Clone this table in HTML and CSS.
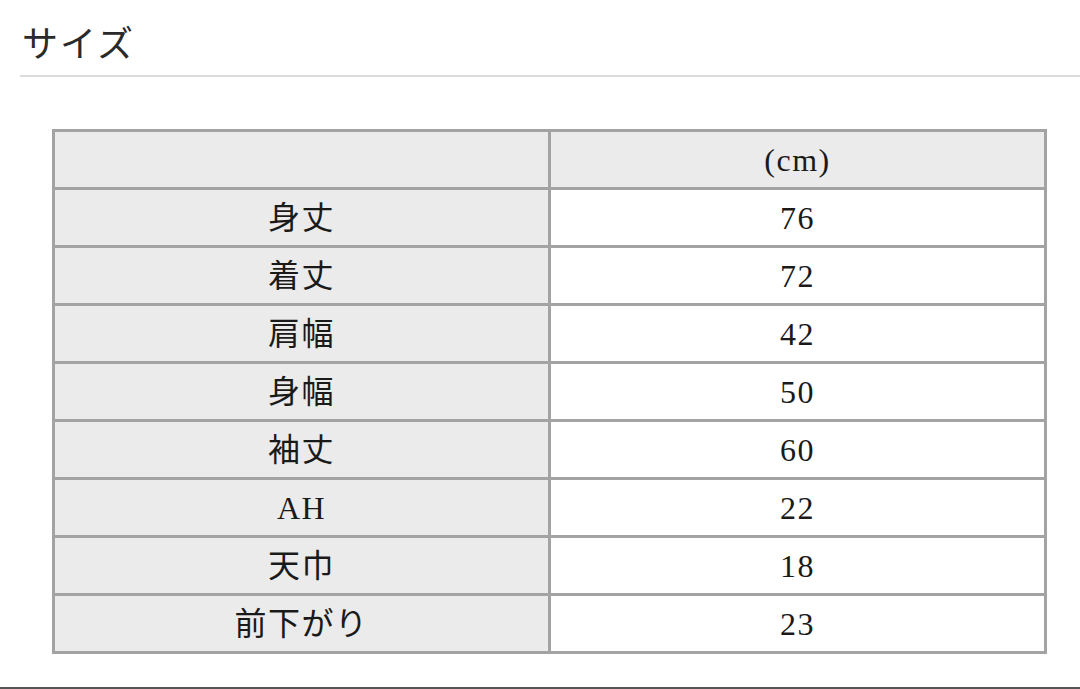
FILE: index.html
```html
<!DOCTYPE html>
<html lang="ja">
<head>
<meta charset="utf-8">
<link rel="stylesheet" href="styles.css">
</head>
<body>
<div class="page">
  <h2 class="title">サイズ</h2>
  <div class="rule"></div>
  <table class="size-table">
    <tr class="head"><th class="label"></th><th class="value">(cm)</th></tr>
    <tr><td class="label">身丈</td><td class="value">76</td></tr>
    <tr><td class="label">着丈</td><td class="value">72</td></tr>
    <tr><td class="label">肩幅</td><td class="value">42</td></tr>
    <tr><td class="label">身幅</td><td class="value">50</td></tr>
    <tr><td class="label">袖丈</td><td class="value">60</td></tr>
    <tr><td class="label">AH</td><td class="value">22</td></tr>
    <tr><td class="label">天巾</td><td class="value">18</td></tr>
    <tr><td class="label">前下がり</td><td class="value">23</td></tr>
  </table>
  <div class="bottom-line"></div>
</div>
</body>
</html>
```
FILE: styles.css
```css
html, body {
  margin: 0;
  padding: 0;
  background: #fff;
}
.page {
  width: 1080px;
  height: 689px;
  overflow: hidden;
  position: relative;
  font-family: "Liberation Serif", "Noto Sans CJK JP", serif;
  color: #1a1a1a;
}
.title {
  margin: 0;
  padding: 23px 0 0 22px;
  height: 52px;
  font-weight: normal;
  font-size: 36px;
  line-height: 44px;
  letter-spacing: 2px;
  color: #2a2a2a;
}
.rule {
  margin-left: 20px;
  border-top: 2px solid #dcdcdc;
}
.size-table {
  margin: 52px 0 0 52px;
  width: 995px;
  border-collapse: collapse;
  table-layout: fixed;
  border: 3px solid #a3a3a3;
}
.size-table th,
.size-table td {
  border: 3px solid #a3a3a3;
  height: 55px;
  padding: 0;
  text-align: center;
  font-weight: normal;
  font-size: 32px;
  letter-spacing: 1.5px;
  line-height: 32px;
}
.size-table .label {
  background: #ebebeb;
}
.size-table .head th {
  background: #ebebeb;
}
.size-table .value {
  background: #fff;
}
.size-table .head .value {
  background: #ebebeb;
}
.bottom-line {
  position: absolute;
  left: 0;
  right: 0;
  top: 687px;
  border-top: 2px solid #555;
}
```
